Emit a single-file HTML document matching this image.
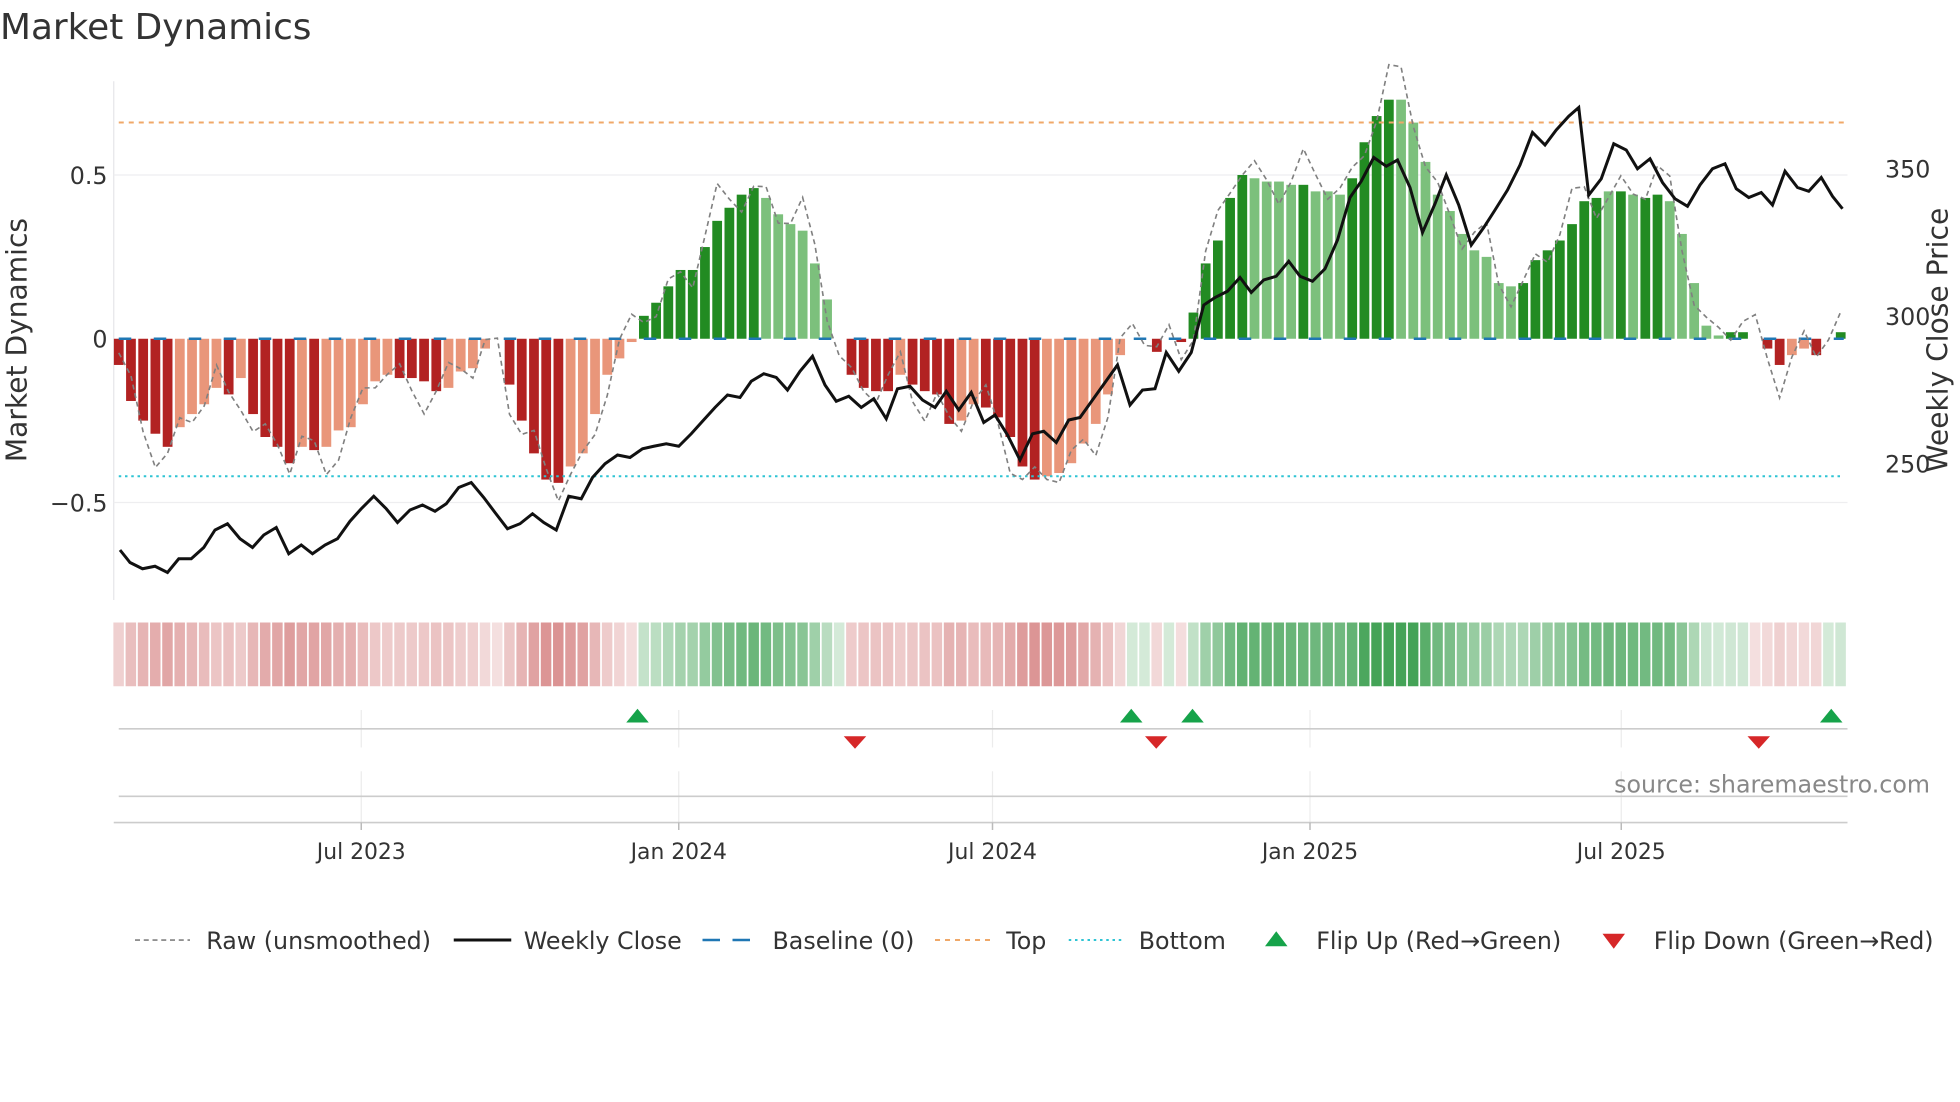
<!DOCTYPE html>
<html><head><meta charset="utf-8"><style>
html,body{margin:0;padding:0;background:#fff;}
svg{display:block;font-family:"DejaVu Sans","Liberation Sans",sans-serif;}
</style></head><body>
<svg id="s" width="1960" height="1102" viewBox="0 0 1568 881.6" xmlns="http://www.w3.org/2000/svg">
<rect width="1568" height="882" fill="#fff"/>
<text x="0" y="31" font-size="28.7" fill="#333">Market Dynamics</text>
<line x1="91" y1="65" x2="91" y2="480" stroke="#e6e6ea" stroke-width="1"/>
<line x1="91" y1="140" x2="1478" y2="140" stroke="#eeeef0" stroke-width="1"/>
<line x1="91" y1="402" x2="1478" y2="402" stroke="#eeeef0" stroke-width="1"/>
<g id="bars"></g>
<line x1="95" y1="98" x2="1475" y2="98" stroke="#f0a868" stroke-width="1.6" stroke-dasharray="4,4"/>
<line x1="95" y1="381" x2="1475" y2="381" stroke="#2ec4d4" stroke-width="1.6" stroke-dasharray="2,3"/>
<line x1="95" y1="271" x2="1475" y2="271" stroke="#1f77b4" stroke-width="2" stroke-dasharray="10,18"/>
<polyline id="raw" fill="none" stroke="#808080" stroke-width="1.3" stroke-dasharray="4,3"/>
<polyline id="price" fill="none" stroke="#111" stroke-width="2.4"/>
<g font-size="19" fill="#333" text-anchor="end">
<text x="86" y="147">0.5</text><text x="86" y="278">0</text><text x="86" y="409">−0.5</text>
</g>
<g font-size="19" fill="#333">
<text x="1508" y="142">350</text><text x="1508" y="260">300</text><text x="1508" y="378">250</text>
</g>
<text transform="translate(21,272) rotate(-90)" font-size="22.5" fill="#333" text-anchor="middle">Market Dynamics</text>
<text transform="translate(1558,272) rotate(-90)" font-size="22.5" fill="#333" text-anchor="middle">Weekly Close Price</text>
<g id="heat"></g>
<g stroke="#ececec" stroke-width="1">
<line x1="289" y1="568" x2="289" y2="598"/><line x1="543" y1="568" x2="543" y2="598"/><line x1="794" y1="568" x2="794" y2="598"/><line x1="1048" y1="568" x2="1048" y2="598"/><line x1="1297" y1="568" x2="1297" y2="598"/>
<line x1="289" y1="617" x2="289" y2="658"/><line x1="543" y1="617" x2="543" y2="658"/><line x1="794" y1="617" x2="794" y2="658"/><line x1="1048" y1="617" x2="1048" y2="658"/><line x1="1297" y1="617" x2="1297" y2="658"/>
</g>
<line x1="95" y1="583" x2="1478" y2="583" stroke="#ccc" stroke-width="1.3"/>
<line x1="95" y1="637" x2="1478" y2="637" stroke="#ccc" stroke-width="1.3"/>
<line x1="91" y1="658" x2="1478" y2="658" stroke="#ccc" stroke-width="1.3"/>
<g stroke="#bbb" stroke-width="1.2"><line x1="289" y1="658" x2="289" y2="664"/><line x1="543" y1="658" x2="543" y2="664"/><line x1="794" y1="658" x2="794" y2="664"/><line x1="1048" y1="658" x2="1048" y2="664"/><line x1="1297" y1="658" x2="1297" y2="664"/></g>
<g fill="#16a34a"><path d="M501,578 L519,578 L510,567Z"/><path d="M896,578 L914,578 L905,567Z"/><path d="M945,578 L963,578 L954,567Z"/><path d="M1456,578 L1474,578 L1465,567Z"/></g>
<g fill="#d62728"><path d="M675,589 L693,589 L684,599Z"/><path d="M916,589 L934,589 L925,599Z"/><path d="M1398,589 L1416,589 L1407,599Z"/></g>
<text x="1544" y="634" font-size="19" fill="#888" text-anchor="end">source: sharemaestro.com</text>
<g font-size="17.5" fill="#333" text-anchor="middle">
<text x="289" y="687">Jul 2023</text><text x="543" y="687">Jan 2024</text><text x="794" y="687">Jul 2024</text><text x="1048" y="687">Jan 2025</text><text x="1297" y="687">Jul 2025</text>
</g>
<g font-size="19" fill="#333">
<line x1="108" y1="752" x2="152" y2="752" stroke="#808080" stroke-width="1.3" stroke-dasharray="4,3"/>
<text x="165" y="759">Raw (unsmoothed)</text>
<line x1="363" y1="752" x2="409" y2="752" stroke="#111" stroke-width="2.4"/>
<text x="419" y="759">Weekly Close</text>
<line x1="562" y1="752" x2="606" y2="752" stroke="#1f77b4" stroke-width="2" stroke-dasharray="14,10"/>
<text x="618" y="759">Baseline (0)</text>
<line x1="748" y1="752" x2="794" y2="752" stroke="#f0a868" stroke-width="1.6" stroke-dasharray="4,4"/>
<text x="805" y="759">Top</text>
<line x1="855" y1="752" x2="900" y2="752" stroke="#2ec4d4" stroke-width="1.6" stroke-dasharray="2,3"/>
<text x="911" y="759">Bottom</text>
<path d="M1012,757 L1030,757 L1021,745Z" fill="#16a34a"/>
<text x="1053" y="759">Flip Up (Red→Green)</text>
<path d="M1282,747 L1300,747 L1291,759Z" fill="#d62728"/>
<text x="1323" y="759">Flip Down (Green→Red)</text>
</g>
</svg>
<script>
var V=("-0.08D,-0.19D,-0.25D,-0.29D,-0.33D,-0.27L,-0.23L,-0.2L,-0.15L,-0.17D,-0.12L,-0.23D,-0.3D,-0.33D,-0.38D,-0.33L,-0.34D,-0.33L,-0.28L,-0.27L,-0.2L,-0.13L,-0.11L,-0.12D,-0.12D,-0.13D,-0.16D,-0.15L,-0.1L,-0.09L,-0.03L,0L,-0.14D,-0.25D,-0.35D,-0.43D,-0.44D,-0.39L,-0.35L,-0.23L,-0.11L,-0.06L,-0.01L,"+
"0.07D,0.11D,0.16D,0.21D,0.21D,0.28D,0.36D,0.4D,0.44D,0.46D,0.43L,0.38L,0.35L,0.33L,0.23L,0.12L,0L,"+
"-0.11D,-0.15D,-0.16D,-0.16D,-0.11L,-0.14D,-0.16D,-0.17D,-0.26D,-0.25L,-0.2L,-0.21D,-0.24D,-0.3D,-0.39D,-0.43D,-0.42L,-0.41L,-0.38L,-0.32L,-0.26L,-0.17L,-0.05L,0L,0L,-0.04D,0L,-0.01D,"+
"0.08D,0.23D,0.3D,0.43D,0.5D,0.49L,0.48L,0.48L,0.47L,0.47D,0.45L,0.45L,0.44L,0.49D,0.6D,0.68D,0.73D,0.73L,0.66L,0.54L,0.44L,0.39L,0.32L,0.27L,0.25L,0.17L,0.16L,0.17D,0.24D,0.27D,0.3D,0.35D,0.42D,0.43D,0.45L,0.45D,0.44L,0.43D,0.44D,0.42L,0.32L,0.17L,0.04L,0.01L,0.02D,0.02D,"+
"0L,-0.03D,-0.08D,-0.05L,-0.03L,-0.05D,0L,0.02D").split(",");
var NS="http://www.w3.org/2000/svg",b=document.getElementById("bars"),h=document.getElementById("heat"),raw=[];
var n=V.length,step=9.77;
function R(g,x,y,w,hh,f,o){var r=document.createElementNS(NS,"rect");r.setAttribute("x",x);r.setAttribute("y",y);r.setAttribute("width",w);r.setAttribute("height",hh);r.setAttribute("fill",f);if(o!=null)r.setAttribute("fill-opacity",o);g.appendChild(r);}
for(var i=0;i<n;i++){var v=parseFloat(V[i]),d=V[i].slice(-1)=="D",x=95+i*step;
var f=v>=0?(d?"#228b22":"#7cc07c"):(d?"#b22222":"#e9967a");
var y0=271,y1=271-v*262;if(Math.abs(v)>0.001)R(b,x-3.9,Math.min(y0,y1),7.8,Math.abs(y1-y0),f);
var o=Math.min(0.95,0.22+Math.abs(v)*1.15);
var g=v>0.001||(v==0&&((i>42&&i<60)||i==83||i==84||i==86||i==140));
R(h,x-4.3,498,8.4,51,g?"#3a9e4e":"#c85a5a",g?o:o*0.9);
var nz=Math.sin(i*1.7)*0.06+Math.cos(i*0.9)*0.04;raw.push(x.toFixed(1)+","+(271-(v*1.04+nz)*262).toFixed(1));}
document.getElementById("raw").setAttribute("points",raw.join(" "));
document.getElementById("price").setAttribute("points","96,440 104,450 114,455 124,453 134,458 143,447 153,447 163,438 172,424 182,419 192,431 202,438 211,428 221,422 231,443 241,436 250,443 260,436 270,431 280,417 289,407 299,397 309,407 318,418 328,408 338,404 348,409 357,403 367,390 377,386 387,398 396,410 406,423 416,419 426,411 435,418 445,424 455,397 465,399 474,382 484,371 494,364 504,366 514,359 523,357 533,355 543,357 553,347 562,337 572,326 582,316 592,318 601,305 611,299 621,302 630,312 640,297 650,285 660,308 669,321 679,317 689,326 699,319 709,335 718,311 728,309 738,320 748,326 757,313 767,328 777,314 787,338 796,332 806,348 816,368 826,347 835,345 845,354 855,336 864,334 874,320 884,306 894,292 904,324 914,312 924,311 933,282 943,297 953,282 963,244 972,238 982,233 992,222 1001,234 1011,224 1021,221 1031,209 1040,221 1050,225 1060,215 1070,192 1080,158 1089,145 1099,126 1109,133 1118,128 1128,150 1138,186 1148,163 1157,140 1167,164 1177,196 1187,182 1196,168 1206,152 1216,132 1226,106 1236,116 1245,104 1255,93 1263,86 1271,156 1281,143 1291,115 1301,120 1310,135 1320,127 1330,146 1340,159 1350,165 1360,148 1370,135 1380,131 1389,151 1399,158 1409,154 1418,164 1428,137 1438,150 1447,153 1457,142 1466,157 1474,167");
</script>
</body></html>
